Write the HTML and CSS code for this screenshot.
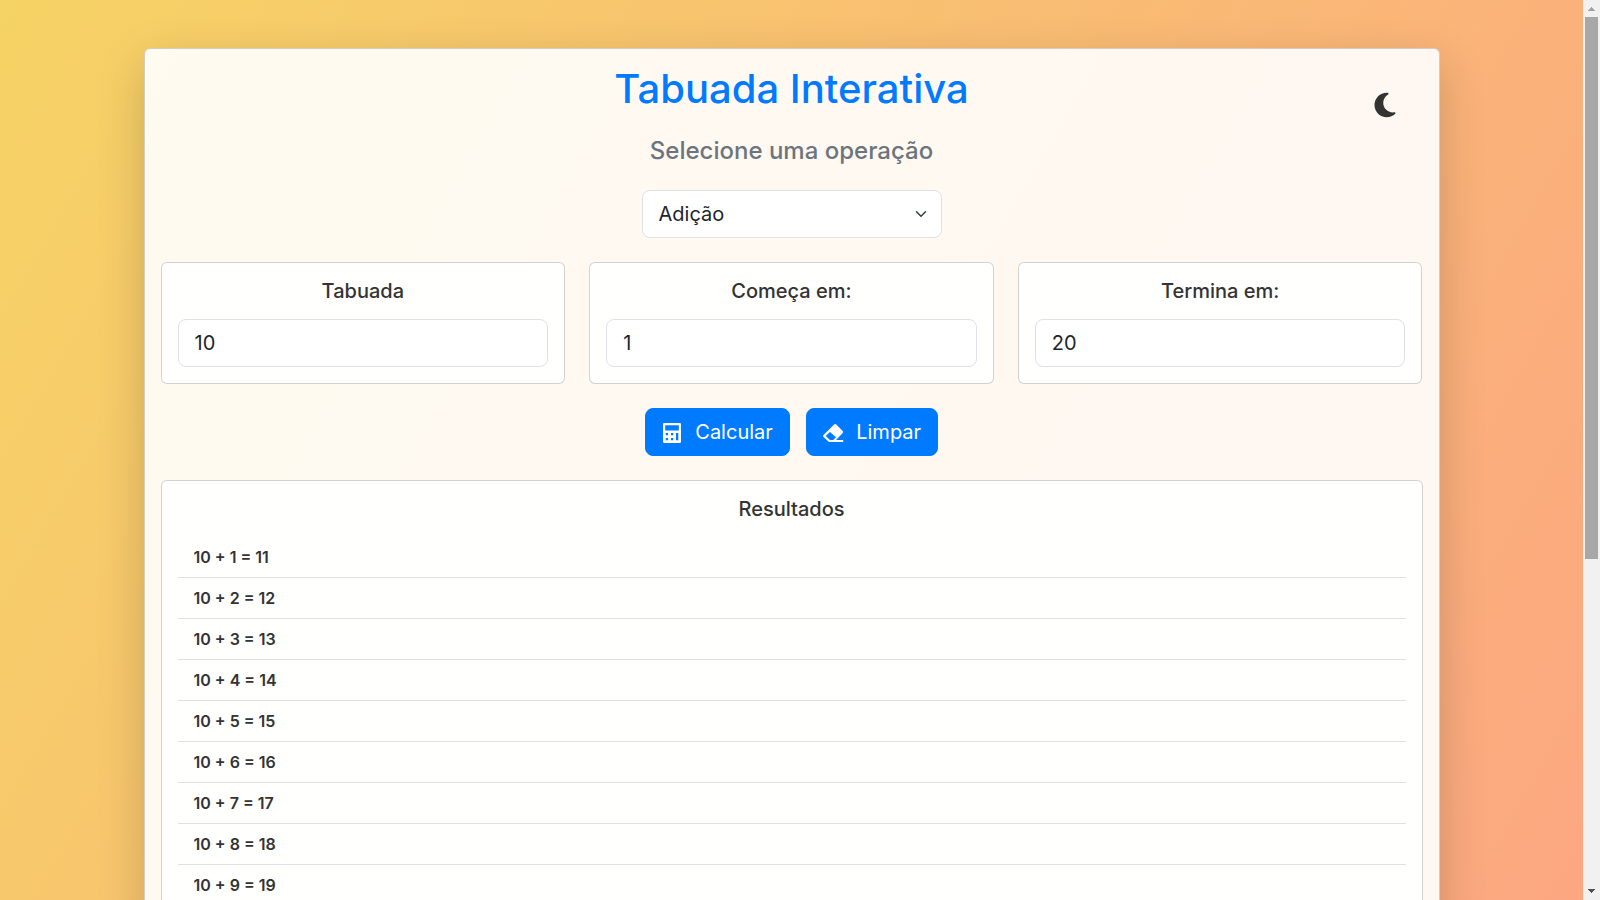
FILE: index.html
```html
<!DOCTYPE html>
<html lang="pt-BR">
<head>
<meta charset="utf-8">
<title>Tabuada Interativa</title>
<link rel="stylesheet" href="styles.css">
</head>
<body>
<div class="page">
  <main class="viewport">
    <section class="card panel">
      <header class="head">
        <h1 class="title">Tabuada Interativa</h1>
        <svg class="moon" viewBox="0 0 384 512"><path d="M223.500 32C100 32 0 132.300 0 256S100 480 223.500 480c60.600 0 115.500-24.200 155.800-63.400c5-4.900 6.300-12.500 3.100-18.700s-10.100-9.700-17-8.500c-9.800 1.700-19.800 2.600-30.100 2.600c-96.900 0-175.500-78.800-175.500-176c0-65.800 36-123.100 89.300-153.300c6.100-3.500 9.200-10.500 7.700-17.300s-7.300-11.900-14.300-12.500c-6.300-.5-12.600-.8-19-.8z"/></svg>
      </header>
      <h4 class="subtitle">Selecione uma operação</h4>
      <div class="select"><span>Adição</span>
        <svg class="chevron" viewBox="0 0 16 16"><path d="m2 5 6 6 6-6"/></svg>
      </div>
      <div class="fields">
        <div class="card field"><h5 class="label">Tabuada</h5><div class="input">10</div></div>
        <div class="card field"><h5 class="label">Começa em:</h5><div class="input">1</div></div>
        <div class="card field"><h5 class="label">Termina em:</h5><div class="input">20</div></div>
      </div>
      <div class="actions">
        <button class="btn"><svg class="icon" viewBox="0 0 24 24"><path fill-rule="evenodd" d="M4.200 2h15.600Q21 2 21 3.200v17.600q0 1.200-1.200 1.200H4.200Q3 22 3 20.800V3.200Q3 2 4.200 2zM5.200 4.300v5.200h13.600V4.300zM5.800 12v2.300h2.300V12zM11 12v2.300h2.300V12zM5.800 17v2.300h2.300V17zM11 17v2.300h2.300V17zM16 12v7.300h2.300V12z"/></svg>Calcular</button>
        <button class="btn"><svg class="icon" viewBox="0 0 24 24"><path fill-rule="evenodd" d="M13.100 3.500a1.600 1.600 0 0 1 2.200 0l6.400 6.400a1.600 1.600 0 0 1 0 2.200L15 19h7.200v2H8L2.500 16.100a1.600 1.600 0 0 1 0-2.200zM9 11l-4.300 4L9 19h3.200l2.800-2.700z"/></svg>Limpar</button>
      </div>
      <div class="card field results">
        <h5 class="label">Resultados</h5>
        <ul class="list">
          <li>10 + 1 = 11</li>
          <li>10 + 2 = 12</li>
          <li>10 + 3 = 13</li>
          <li>10 + 4 = 14</li>
          <li>10 + 5 = 15</li>
          <li>10 + 6 = 16</li>
          <li>10 + 7 = 17</li>
          <li>10 + 8 = 18</li>
          <li>10 + 9 = 19</li>
        </ul>
      </div>
    </section>
  </main>
  <aside class="scrollbar">
    <svg class="arrow up" viewBox="0 0 7 4"><path d="M3 0h1v1h1v1h1v1h1v1H0V3h1V2h1V1h1z"/></svg>
    <div class="track"><div class="thumb"></div></div>
    <svg class="arrow" viewBox="0 0 7 4"><path d="M0 0h7v1H6v1H5v1H4v1H3V3H2V2H1V1H0z"/></svg>
  </aside>
</div>
</body>
</html>
```
FILE: styles.css
```css
* { box-sizing: border-box; margin: 0; }
body {
  font: 400 16px/1.5 Inter, "Liberation Sans", sans-serif;
  color: #333;
  overflow: hidden;
}
.page { display: flex; height: 900px; overflow: hidden; }
.viewport {
  flex: 1;
  height: 900px;
  overflow: hidden;
  padding: 48px 143.5px 0;
  background: linear-gradient(120deg, #f6d365 0%, #fda085 100%) 0 0 / 100% 1439px no-repeat;
}
.card {
  border: 1px solid rgba(0, 0, 0, 0.175);
  border-radius: 6px;
  background: rgba(255, 255, 255, 0.9);
}
.panel {
  padding: 16px;
  display: flex;
  flex-direction: column;
  gap: 24px;
  box-shadow: 0 16px 48px rgba(0, 0, 0, 0.175);
}
.head { position: relative; }
.title { font-size: 40px; font-weight: 500; line-height: 48px; color: #007bff; text-align: center; }
.moon { position: absolute; right: 27px; top: 26px; width: 22px; height: 28px; fill: #333; }
.subtitle { font-size: 24px; font-weight: 500; line-height: 28.8px; color: #6c757d; text-align: center; }
.select, .input {
  height: 48px;
  padding: 8px 16px;
  border: 1px solid #dee2e6;
  border-radius: 8px;
  background: #fff;
  color: #212529;
  font-size: 20px;
  line-height: 30px;
}
.select { width: 300px; align-self: center; display: flex; justify-content: space-between; align-items: center; padding-right: 12px; }
.chevron { width: 16px; height: 12px; fill: none; stroke: #343a40; stroke-width: 2; stroke-linecap: round; stroke-linejoin: round; }
.fields { display: grid; grid-template-columns: repeat(3, 1fr); gap: 24px; }
.field { padding: 16px; }
.results { min-height: 878px; }
.label { font-size: 20px; font-weight: 500; line-height: 24px; margin-bottom: 16px; text-align: center; }
.actions { display: flex; justify-content: center; gap: 16px; }
.btn {
  display: flex;
  align-items: center;
  height: 48px;
  padding: 8px 16px;
  border: 1px solid #007bff;
  border-radius: 8px;
  background: #007bff;
  color: #fff;
  font: 400 20px/30px Inter, "Liberation Sans", sans-serif;
}
.icon { width: 24px; height: 24px; margin: 2px 11.400px 0 -2px; fill: currentColor; }
.list { list-style: none; padding: 0; }
.list li { padding: 8px 16px; line-height: 24px; font-weight: 600; border-bottom: 1px solid #dee2e6; }
.scrollbar { width: 17px; background: #f1f1f1; display: flex; flex-direction: column; align-items: center; padding: 7px 0; }
.arrow { width: 7px; height: 4px; fill: #505050; flex: none; }
.up { fill: #a3a3a3; }
.track { flex: 1; padding-top: 6px; }
.thumb { width: 13px; height: 542px; background: #a8a8a8; }
```
